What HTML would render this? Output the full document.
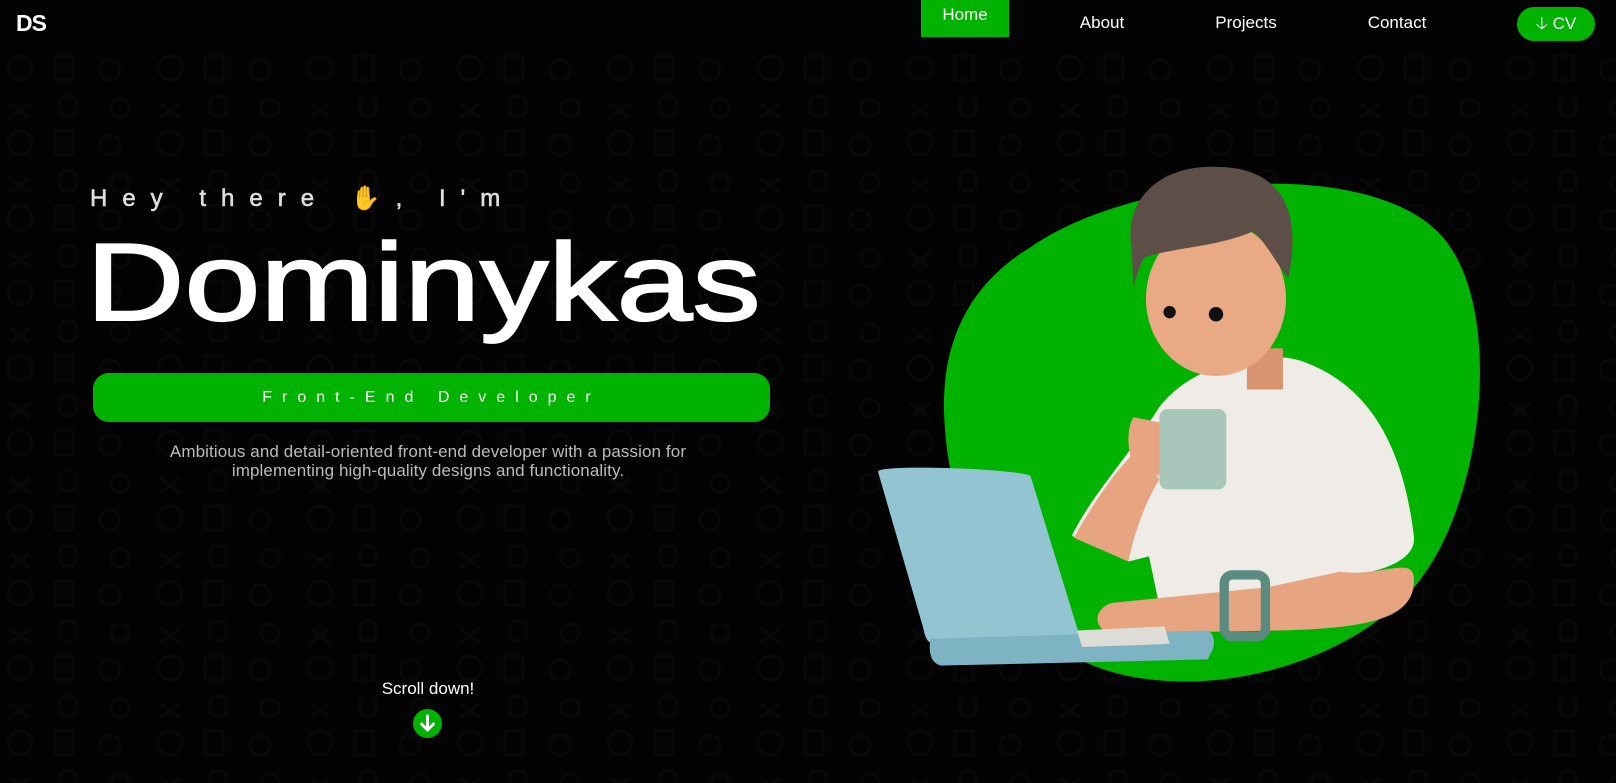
<!DOCTYPE html>
<html><head><meta charset="utf-8"><style>
*{margin:0;padding:0;box-sizing:border-box}
body{width:1616px;height:783px;background:#030303;overflow:hidden;position:relative;font-family:"Liberation Sans",sans-serif;color:#fff}
.pat{position:absolute;left:0;top:48px;width:1616px;height:735px}
.logo{position:absolute;left:16px;top:10px;font-size:23px;font-weight:bold;letter-spacing:-1px}
.nav a{position:absolute;top:13px;font-size:17px;color:#fff;text-decoration:none;transform:translateX(-50%)}
.home{position:absolute;left:921px;top:0;width:88px;height:37px;background:#00b300;text-align:center;font-size:17px;padding-top:5px}
.cv{position:absolute;left:1517px;top:7px;width:78px;height:34px;border-radius:17px;background:#00b300;font-size:17px;text-align:center;line-height:34px}
.hey{position:absolute;left:90px;top:184px;font-size:24px;letter-spacing:15px;color:#ddd;-webkit-text-stroke:0.6px #ddd}
.name{position:absolute;left:86px;top:213px;font-size:110px;line-height:140px;transform:scaleX(1.24);transform-origin:left top;-webkit-text-stroke:2px #fff;white-space:nowrap}
.pill{position:absolute;left:93px;top:373px;width:677px;height:49px;border-radius:16px;background:#00b300;text-align:center;line-height:49px;font-size:16px;letter-spacing:10px}
.desc{position:absolute;left:138px;width:580px;top:442px;text-align:center;font-size:17px;line-height:19px;color:#bbb;letter-spacing:0.1px}
.scroll{position:absolute;left:328px;width:200px;text-align:center;top:679px;font-size:17px}
.arr{position:absolute;left:413px;top:709px;width:29px;height:29px;border-radius:50%;background:#00b300}
.fig{position:absolute;left:0;top:0;width:1616px;height:783px}
</style></head><body>
<svg class="pat" width="1616" height="735"><defs><pattern id="p" width="150" height="75" patternUnits="userSpaceOnUse"><g fill="none" stroke="#080808" stroke-width="3"><circle cx="20" cy="20" r="12"/><rect x="55" y="8" width="18" height="24"/><circle cx="110" cy="22" r="10"/><path d="M10 55 l20 15 M30 55 l-20 15"/><rect x="60" y="48" width="16" height="20" rx="6"/><circle cx="120" cy="60" r="9"/></g></pattern></defs><rect width="1616" height="735" fill="url(#p)"/></svg>
<div class="logo">DS</div>
<div class="home">Home</div>
<div class="nav"><a style="left:1102px">About</a><a style="left:1246px">Projects</a><a style="left:1397px">Contact</a></div>
<div class="cv">&#129123; CV</div>
<div class="hey">Hey there <span style="color:#f5d800;-webkit-text-stroke:0">&#9995;</span>, I'm</div>
<div class="name">Dominykas</div>
<div class="pill">Front-End Developer</div>
<div class="desc">Ambitious and detail-oriented front-end developer with a passion for<br>implementing high-quality designs and functionality.</div>
<div class="scroll">Scroll down!</div>
<div class="arr"><svg width="29" height="29"><path d="M14.5 7v14M8.5 15l6 6 6-6" stroke="#fff" stroke-width="3" fill="none" stroke-linecap="round" stroke-linejoin="round"/></svg></div>
<svg class="fig" viewBox="0 0 1568 760" width="1616" height="783">
<path d="M1000 240 C1100 170,1330 150,1400 230 C1460 300,1440 480,1380 560 C1330 630,1200 680,1090 655 C980 630,920 520,916 400 C914 320,950 270,1000 240Z" fill="#00b300"/>
<path d="M1125 395 C1160 350,1230 340,1262 350 C1320 370,1360 420,1372 520 C1375 540,1350 555,1300 560 L1300 600 L1130 612 L1115 540 L1095 545 L1040 520 C1060 480,1090 450,1125 395Z" fill="#efebe7"/>
<path d="M1042 522 C1060 490,1080 460,1100 440 L1125 465 C1110 490,1100 520,1095 545Z" fill="#e6a480"/>
<path d="M1300 555 C1340 560,1370 540,1372 560 C1375 600,1330 610,1240 612 L1080 615 C1060 612,1060 590,1080 585 L1230 570Z" fill="#e6a480"/>
<rect x="1188" y="558" width="40" height="60" rx="8" fill="none" stroke="#5a8a80" stroke-width="9"/>
<rect x="1210" y="338" width="35" height="40" fill="#d8946e"/>
<ellipse cx="1180" cy="290" rx="68" ry="75" fill="#eaa985"/>
<path d="M1098 240 C1090 190,1130 160,1180 162 C1240 162,1265 200,1250 270 C1235 250,1225 230,1215 225 C1180 240,1140 240,1110 250 C1105 260,1102 270,1100 280Z" fill="#5d4e48"/>
<circle cx="1135" cy="303" r="6" fill="#111"/><circle cx="1180" cy="305" r="7" fill="#111"/>
<path d="M1100 405 C1090 420,1095 460,1115 470 L1130 455 L1125 410Z" fill="#e6a480"/>
<rect x="1125" y="397" width="65" height="78" rx="8" fill="#a9c6bb"/>
<path d="M852 458 C850 450,990 455,1000 462 L1046 612 C1048 620,1040 625,1030 625 L910 626 C900 625,898 620,896 610Z" fill="#92c4d2"/>
<path d="M903 620 L1170 612 C1178 612,1180 625,1176 632 L1172 640 L915 646 C905 646,900 635,903 620Z" fill="#7db3c2"/>
<path d="M1045 612 L1130 608 L1135 625 L1050 628Z" fill="#dedcd6"/>
</svg>
</body></html>
